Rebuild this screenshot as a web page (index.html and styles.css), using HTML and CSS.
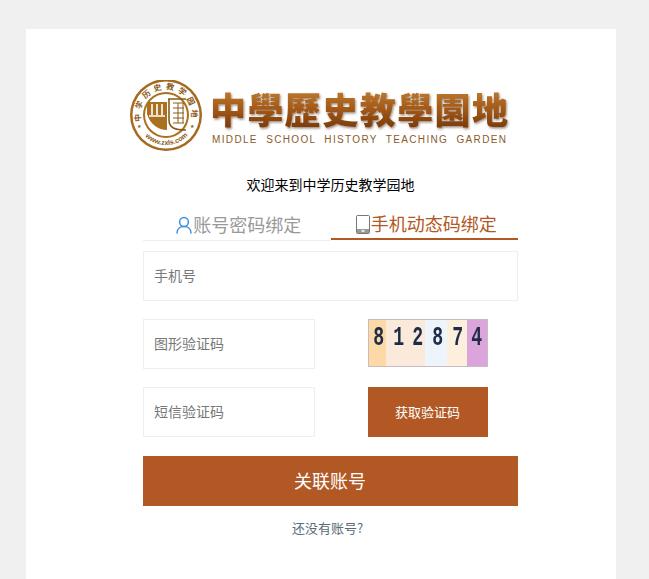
FILE: index.html
```html
<!DOCTYPE html>
<html lang="zh-CN">
<head>
	<meta charset="UTF-8" />
	<title>中学历史教学园地</title>
	<link rel="stylesheet" href="styles.css">
</head>
<body>
	<main class="card">
		<svg class="logo" width="380" height="80" viewBox="0 0 380 80">
			<defs>
				<linearGradient id="gold" x1="0" y1="0" x2="0" y2="1">
					<stop offset="0" stop-color="#c98a3c" />
					<stop offset="0.5" stop-color="#a55a16" />
					<stop offset="1" stop-color="#6e3208" />
				</linearGradient>
				<filter id="shade" x="-5%" y="-10%" width="110%" height="125%">
					<feDropShadow dx="1" dy="1.5" stdDeviation="0.8" flood-color="#4a2a10" flood-opacity="0.55" />
				</filter>
				<path id="ring" d="M 11.4 41.6 A 25.5 25.5 0 1 1 60.6 41.6" />
				<path id="ringlow" d="M 13 54.3 A 30 30 0 0 0 59 54.3" />
			</defs>
			<circle cx="36" cy="35" r="36" fill="#a56a20" />
			<circle cx="36" cy="35" r="33.5" fill="#fff" />
			<circle cx="36" cy="35" r="23" fill="#a9701f" />
			<circle cx="36" cy="35" r="21" fill="#fff" />
			<path class="seal" d="M17 22h20v28c-9 0-17-6-20-16z" />
			<path class="seal-cut" d="M22 24v11M27 24v11M32 24v11M19 36h16" />
			<path class="seal-line" d="M38 19h18M39 19v21c0 8 6 10 17 10" />
			<path class="seal-line thin" d="M43 23h11M43 28h11M43 33h11M43 38h11M43 43h11M48 23v20M53 23v20" />
			<text class="ring-text" fill="#8c5a18">
				<textPath href="#ring">中学历史教学园地</textPath>
			</text>
			<text class="ring-url" fill="#8c5a18">
				<textPath href="#ringlow" startOffset="3">www.zxls.com</textPath>
			</text>
			<text class="star" x="7" y="48" fill="#8c5a18">★</text>
			<text class="star" x="60" y="48" fill="#8c5a18">★</text>
			<text class="title" x="80" y="44" textLength="298" lengthAdjust="spacing" fill="url(#gold)" filter="url(#shade)">中學歷史教學園地</text>
			<text class="subtitle" x="82" y="62.5" textLength="294" lengthAdjust="spacing">MIDDLE  SCHOOL  HISTORY  TEACHING  GARDEN</text>
		</svg>

		<p class="welcome">欢迎来到中学历史教学园地</p>

		<div class="tabs">
			<div class="tab">
				<svg class="tab-icon" width="16" height="18" viewBox="0 0 16 18">
					<circle cx="8" cy="6" r="4.4" fill="none" stroke="#3f8fe0" stroke-width="1.5" />
					<path d="M1 17c0-4 3-6.5 7-6.5s7 2.5 7 6.5" fill="none" stroke="#3f8fe0" stroke-width="1.5" stroke-linecap="round" />
				</svg>
				<span>账号密码绑定</span>
			</div>
			<div class="tab tab-active">
				<svg class="tab-icon" width="14" height="19" viewBox="0 0 14 19">
					<rect x="0.5" y="0.5" width="13" height="18" rx="1" fill="none" stroke="#777" stroke-width="1" />
					<rect x="1" y="14" width="12" height="4" fill="#999" />
					<rect x="5.5" y="15.2" width="3" height="1.5" fill="#fff" />
				</svg>
				<span>手机动态码绑定</span>
			</div>
		</div>

		<form class="bind-form" onsubmit="return false">
			<input class="field" type="text" placeholder="手机号" />
			<div class="split">
				<input class="field" type="text" placeholder="图形验证码" />
				<div class="captcha">
					<span>8</span><span>1</span><span>2</span><span>8</span><span>7</span><span>4</span>
				</div>
			</div>
			<div class="split">
				<input class="field" type="text" placeholder="短信验证码" />
				<button class="send" type="button">获取验证码</button>
			</div>
			<button class="submit" type="submit">关联账号</button>
		</form>

		<p class="signup">还没有账号?</p>
	</main>
</body>
</html>
```

FILE: styles.css
```css
html, body {
	margin: 0;
	height: 100%;
	overflow: hidden;
}

body {
	background-color: #f0f0f0;
	font-family: "Noto Sans CJK SC", "Liberation Sans", sans-serif;
	padding: 29px 33px 0 26px;
	box-sizing: border-box;
}

.card {
	background: #fff;
	height: 550px;
	box-sizing: border-box;
	padding: 50px 98px 0 117px;
}

.logo {
	display: block;
	margin-left: -13px;
	margin-top: 1px;
}

.seal {
	fill: #a9701f;
}

.seal-cut {
	fill: none;
	stroke: #fff;
	stroke-width: 1.6;
}

.seal-line {
	fill: none;
	stroke: #8c5a18;
	stroke-width: 1.6;
}

.seal-line.thin {
	stroke-width: 1;
}

.ring-text {
	font-size: 8px;
	font-weight: 700;
	letter-spacing: 3.6px;
}

.ring-url {
	font-family: "Liberation Sans", sans-serif;
	font-size: 7px;
	font-weight: 700;
}

.star {
	font-family: "DejaVu Sans", sans-serif;
	font-size: 5px;
}

.title {
	font-family: "Noto Sans CJK TC", sans-serif;
	font-size: 36px;
	font-weight: 900;
}

.subtitle {
	font-family: "Liberation Sans", sans-serif;
	font-size: 10px;
	fill: #8a5a2c;
	white-space: pre;
}

.welcome {
	margin: 13px 0 0;
	text-align: center;
	font-size: 14px;
	line-height: 22px;
	color: #000;
}

.tabs {
	display: flex;
	align-items: flex-start;
	margin-top: 15px;
}

.tab {
	flex: 1;
	height: 31px;
	padding: 0 0 3px 4px;
	display: flex;
	align-items: center;
	justify-content: center;
	gap: 1px;
	box-sizing: border-box;
	border-bottom: 1px solid #eee;
	font-size: 18px;
	color: #999;
}

.tab-active {
	height: 30px;
	padding: 0 0 2px 4px;
	border-bottom: 2px solid #b25824;
	color: #b25824;
}

.tab-icon {
	display: block;
	margin-top: 3px;
}

.bind-form {
	display: flex;
	flex-direction: column;
	margin-top: 10px;
}

.field {
	height: 50px;
	box-sizing: border-box;
	border: 1px solid #eee;
	padding: 0 10px 2px;
	font-family: inherit;
	font-size: 14px;
	outline: none;
}

.field::placeholder {
	color: #777;
	opacity: 1;
}

.split {
	display: flex;
	margin-top: 18px;
}

.split .field {
	width: 172px;
}

.captcha {
	margin-left: 53px;
	width: 120px;
	height: 48px;
	box-sizing: border-box;
	border: 1px solid #c8bcc0;
	display: flex;
	background: linear-gradient(to right, #fdd9a8 0 17px, #fbe9dc 17px 56px, #eef4fc 56px 78px, #fcefdc 78px 98px, #dca4dc 98px);
	font-family: "Liberation Mono", monospace;
	font-weight: 700;
	font-size: 28px;
	line-height: 36px;
	color: #1e2c48;
	text-align: center;
}

.captcha span {
	display: block;
	flex: 1;
	transform: scaleX(0.65);
	filter: blur(0.4px);
}

.send {
	margin-left: 53px;
	width: 120px;
	height: 50px;
	padding: 0 1px 2px 0;
	border: 0;
	background: #b25824;
	color: #fff;
	font-family: inherit;
	font-size: 13px;
}

.submit {
	margin-top: 19px;
	height: 50px;
	padding: 0 1px 2px 0;
	border: 0;
	background: #b25824;
	color: #fff;
	font-family: inherit;
	font-size: 18px;
}

.signup {
	margin: 12px 0 0;
	padding-right: 6px;
	text-align: center;
	font-size: 13px;
	line-height: 20px;
	color: #5a6a78;
}
```
